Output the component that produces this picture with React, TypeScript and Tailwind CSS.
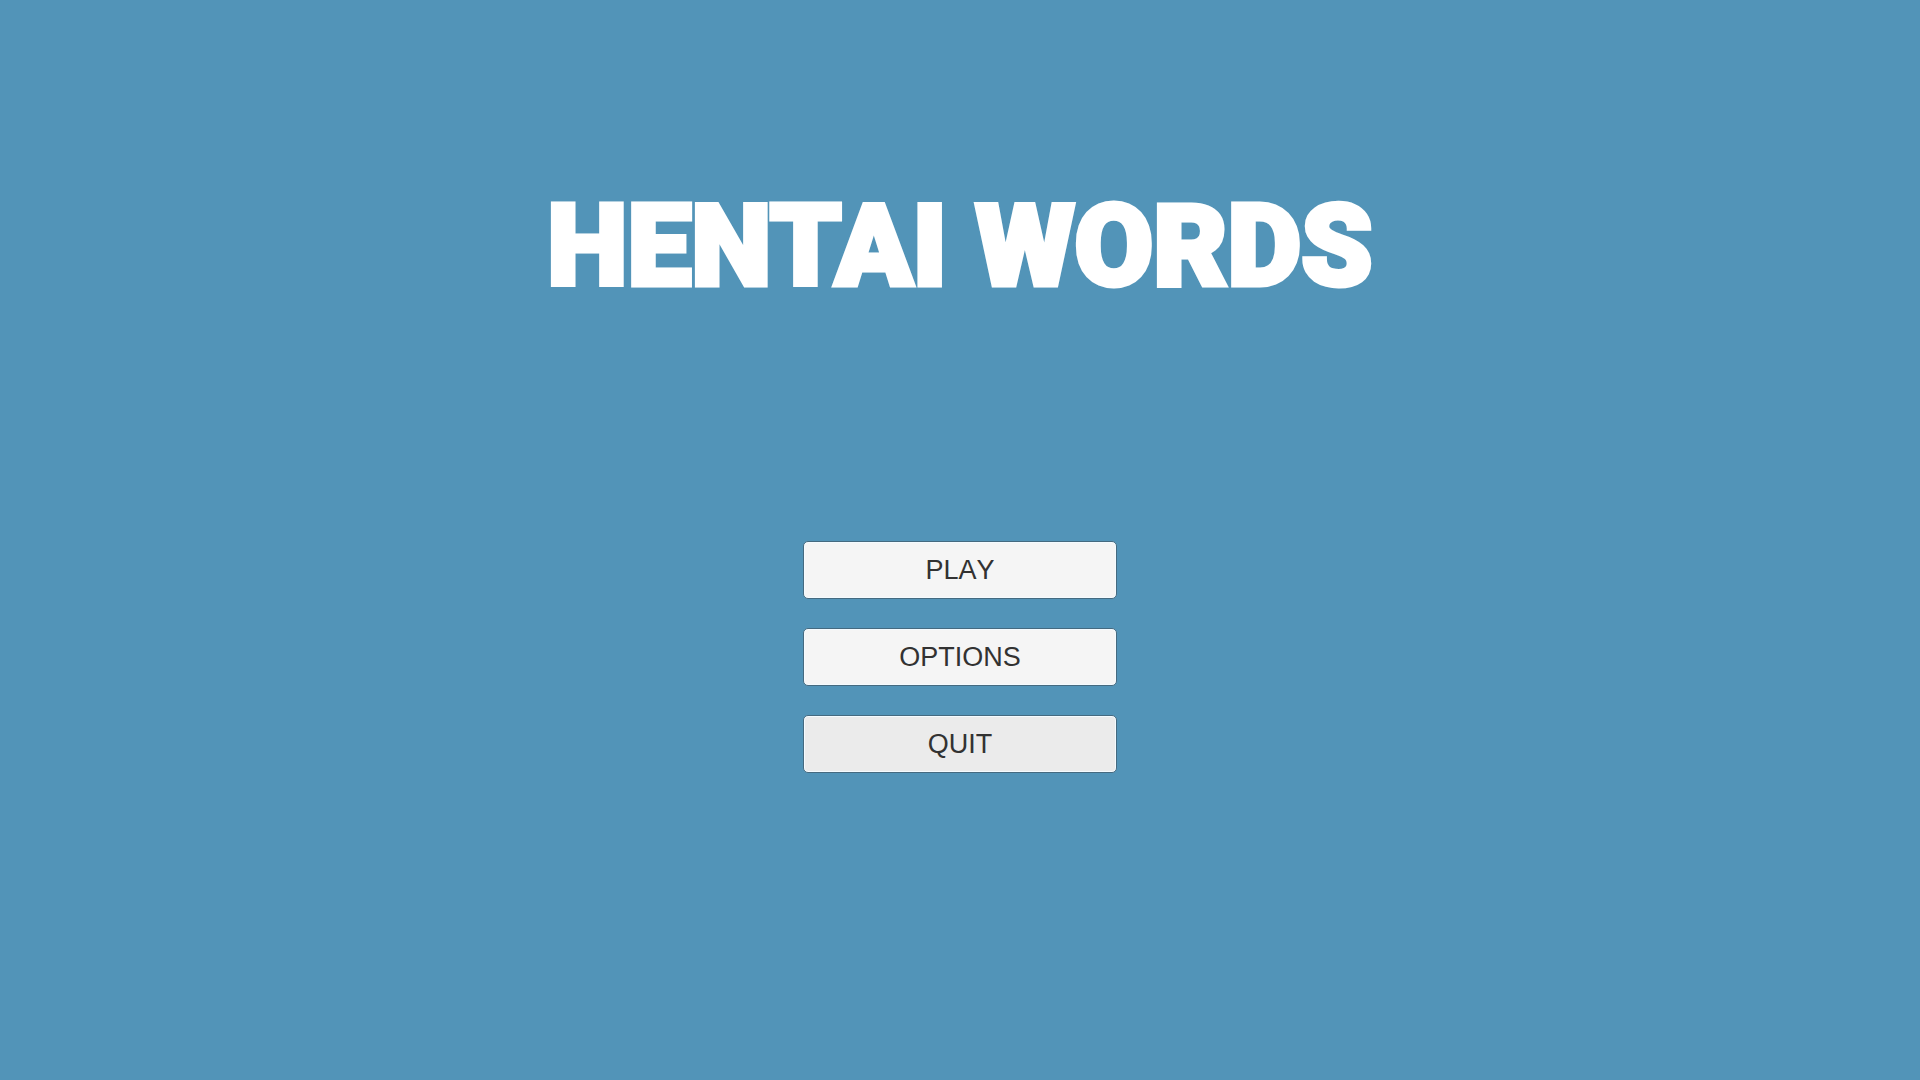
const MENU = [
  { label: 'PLAY', tone: 'bg-[#f5f5f5]' },
  { label: 'OPTIONS', tone: 'bg-[#f5f5f5]' },
  { label: 'QUIT', tone: 'bg-[#ebebeb]' },
]

export default function App() {
  return (
    <main className="flex min-h-screen flex-col items-center bg-[#5294b8] pt-[181px]">
      <h1 className="font-['Roboto',sans-serif] text-[114px] leading-[130px] font-black whitespace-nowrap text-white [-webkit-text-stroke:5px_white]">
        HENTAI WORDS
      </h1>

      {/* Main menu */}
      <nav className="mt-[230px] flex flex-col gap-[29px]">
        {MENU.map(item => (
          <button
            key={item.label}
            type="button"
            className={`h-[58px] w-[314px] rounded-[5px] border border-[#456a80] font-['Liberation_Sans',Arial,sans-serif] text-[27px] leading-8 text-[#323232] inset-ring-1 inset-ring-[#f4fbff] [font-kerning:none] ${item.tone}`}
          >
            {item.label}
          </button>
        ))}
      </nav>
    </main>
  )
}
